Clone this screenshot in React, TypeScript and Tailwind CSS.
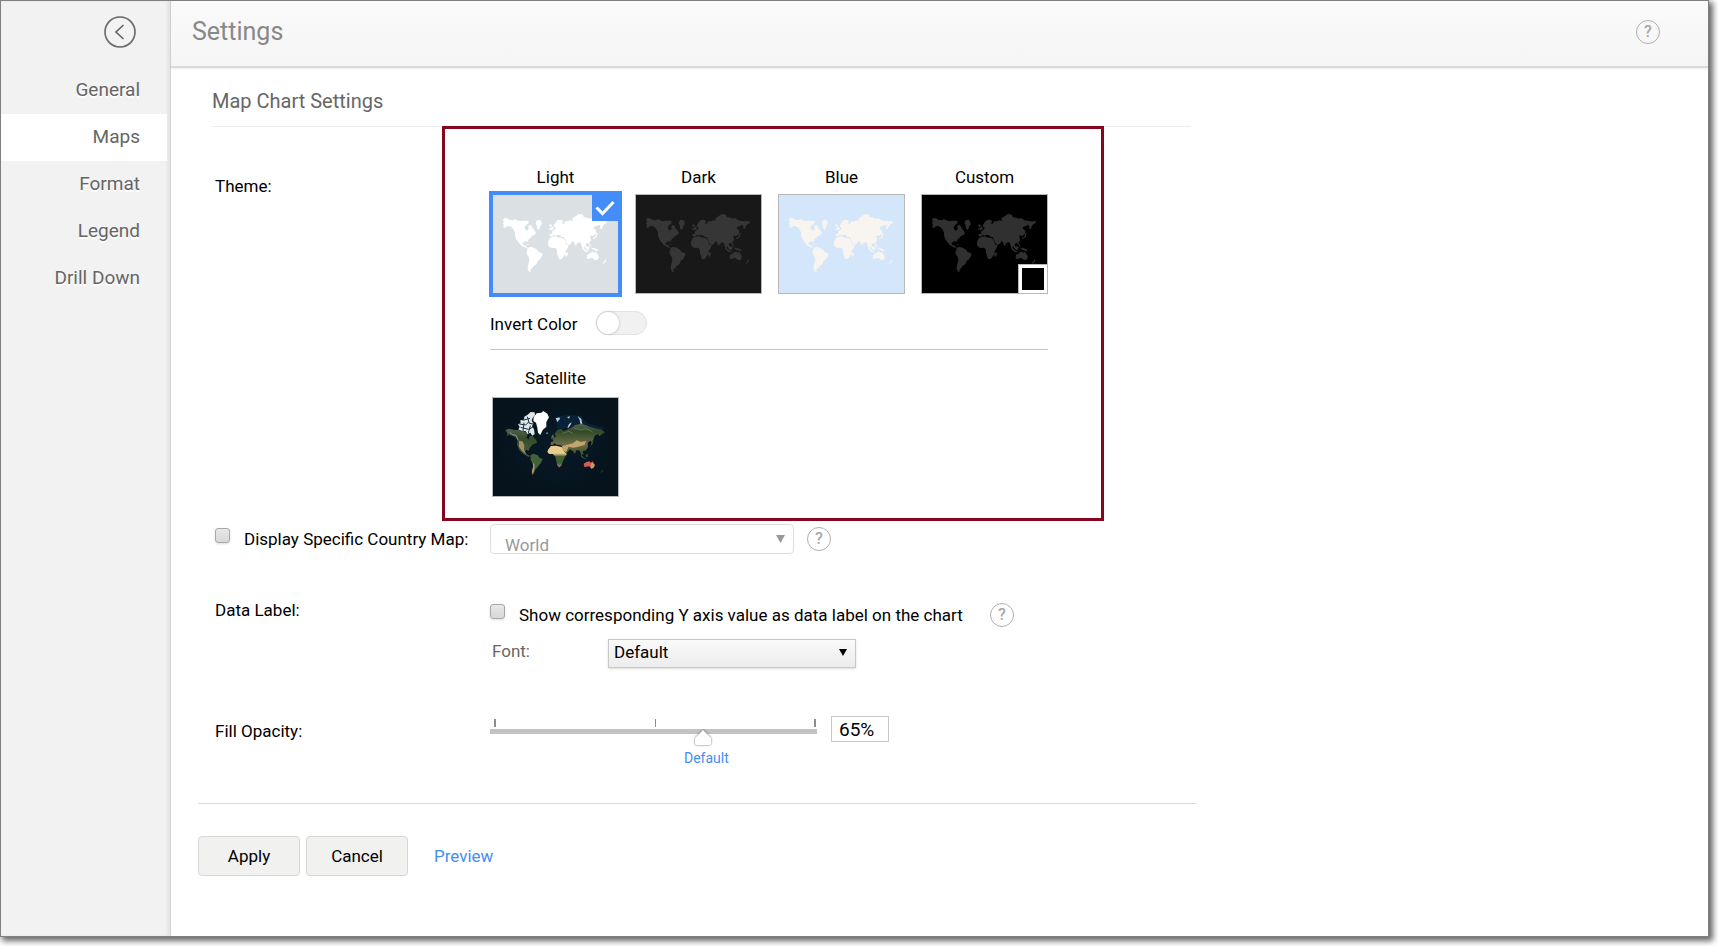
import React, { useState } from 'react';
import { clsx } from 'clsx';

interface MapTheme {
  id: string;
  label: string;
  background: string;
  land: string;
}

const menuItems = ['General', 'Maps', 'Format', 'Legend', 'Drill Down'];

const themes: MapTheme[] = [
  { id: 'light', label: 'Light', background: 'bg-[#dbe0e4]', land: 'text-white' },
  { id: 'dark', label: 'Dark', background: 'bg-[#181818]', land: 'text-[#363636]' },
  { id: 'blue', label: 'Blue', background: 'bg-[#d4e6f9]', land: 'text-[#f8f4f0]' },
  { id: 'custom', label: 'Custom', background: 'bg-black', land: 'text-[#303030]' },
];

function WorldMap({ className }: { className?: string }) {
  return (
    <svg className={clsx('block h-full w-full', className)} viewBox="48 105 375 294" fill="currentColor" aria-hidden="true">
      {/* North America */}
      <path d="M78 180L82 174L90 175L97 179L108 181L113 177L120 181L130 184L136 182L154 182L155 189L148 195L143 200L144 207L150 212L155 207L154 198L160 195L166 200L167 206L172 210L177 219L172 225L164 229L160 234L155 238L151 247L147 243L140 246L136 250L139 256L145 255L147 260L153 264L149 265L140 260L131 255L124 246L117 236L114 226L114 217L109 208L104 202L98 199L91 198L84 204L78 201L81 196L78 190L81 185Z" />
      <path d="M148 251L158 254L157 256L149 253Z" />
      {/* Greenland and Iceland */}
      <path d="M177 185L181 180L188 179L193 184L194 193L190 199L187 208L184 210L180 205L179 196L176 190Z" />
      <path d="M217 194L222 193L225 197L222 201L217 199Z" />
      {/* South America */}
      <path d="M151 266L157 261L166 262L173 265L180 269L185 276L193 279L197 283L193 291L189 298L182 303L179 311L174 316L169 318L167 323L162 326L160 331L162 335L157 335L153 330L152 322L154 312L157 301L156 293L151 285L148 277L151 271Z" />
      {/* Africa */}
      <path d="M219 234L226 230L235 229L243 232L250 233L259 235L264 243L268 254L275 256L272 264L266 272L266 282L261 287L257 294L251 298L246 297L243 288L240 278L239 268L234 263L225 264L218 262L213 254L213 245Z" />
      <path d="M270 276L273 282L269 290L265 289L266 281Z" />
      {/* Europe and Asia */}
      <path d="M218 229L218 222L226 221L224 215L231 211L236 206L234 201L230 201L231 195L236 187L243 180L251 179L259 184L254 190L260 192L265 184L273 184L281 181L288 183L286 175L296 169L304 163L312 162L319 166L320 171L332 173L339 176L346 174L354 180L365 183L376 184L389 184L390 189L383 192L378 197L374 207L370 207L370 198L366 194L359 198L352 200L350 205L357 211L358 218L353 225L347 228L342 226L339 231L342 236L341 244L335 248L326 251L327 257L332 263L327 266L321 258L319 266L324 273L320 271L315 260L311 248L306 247L299 251L298 257L294 256L291 246L285 243L284 249L276 255L270 253L264 240L261 232L252 230L250 226L242 224L237 227L231 224L226 229Z" />
      <path d="M222 204L227 199L231 208L222 211ZM217 205L221 204L220 209L216 210Z" />
      {/* Japan */}
      <path d="M357 221L362 218L359 231L350 238L348 235L355 230Z" />
      {/* South-east Asia */}
      <path d="M317 262L329 273L336 275L334 277L325 275L315 265ZM327 264L335 257L338 263L334 271L328 270ZM335 245L340 253L344 262L340 259L334 250ZM344 263L352 264L361 268L366 273L359 273L351 269L344 267Z" />
      {/* Australia and New Zealand */}
      <path d="M330 285L337 281L343 276L350 275L353 280L357 274L360 281L365 287L365 294L360 301L353 299L346 294L339 295L333 298L329 295Z" />
      <path d="M384 297L388 302L385 306L380 311L377 309L384 303Z" />
    </svg>
  );
}

function SatelliteMap() {
  return (
    <svg className="block h-full w-full" viewBox="39 294 375 294" aria-hidden="true">
      <defs>
        <radialGradient id="ocean">
          <stop offset="0" stopColor="#081927" />
          <stop offset="1" stopColor="#06131c" />
        </radialGradient>
        <linearGradient id="americas" x1="0" y1="0" x2="0" y2="1">
          <stop offset="0" stopColor="#53604b" />
          <stop offset="0.35" stopColor="#354c2c" />
          <stop offset="1" stopColor="#4a6340" />
        </linearGradient>
        <linearGradient id="africa" x1="0" y1="0" x2="0" y2="1">
          <stop offset="0.35" stopColor="#e8ce8e" />
          <stop offset="0.5" stopColor="#496131" />
          <stop offset="0.8" stopColor="#3f5f35" />
          <stop offset="1" stopColor="#bb825b" />
        </linearGradient>
        <linearGradient id="asia" x1="0" y1="0" x2="0" y2="1">
          <stop offset="0" stopColor="#5a6351" />
          <stop offset="0.25" stopColor="#304a28" />
          <stop offset="0.65" stopColor="#6b6c46" />
          <stop offset="1" stopColor="#38502d" />
        </linearGradient>
      </defs>
      <rect x="39" y="294" width="375" height="294" fill="url(#ocean)" />
      {/* Arctic shelf */}
      <path d="M226 352L260 345L302 347L320 369L372 384L360 395L285 377L232 390Z" fill="#0a2238" />
      {/* Arctic islands and Greenland */}
      <path d="M143 344L152 336L164 337L165 346L158 353L155 362L160 370L156 379L162 388L164 402L157 407L151 398L142 402L137 393L126 394L115 388L119 381L114 373L122 370L121 361L132 359L133 350Z" fill="#dfe7e8" />
      <path d="M118 372L137 375L146 366M142 350L148 370L160 372M122 382L145 388L158 382M151 377L145 399M128 361L150 355M132 368L129 393" fill="none" stroke="#14303e" strokeWidth="3" />
      <path d="M161 352L170 340L184 338L190 333L202 341L207 352L199 366L199 380L188 390L181 405L174 398L172 383L168 368L160 363Z" fill="#fff" />
      <path d="M227 355L238 352L240 357L232 366ZM261 351L270 349L267 356ZM293 348L304 357L307 372L301 371L299 360ZM262 383L267 372L275 367L272 374L265 384Z" fill="#b9ccd8" />
      <path d="M197 398L204 397L205 401L199 403Z" fill="#5d7d7c" />
      {/* North America */}
      <path d="M76 390L87 386L104 390L121 391L138 397L143 405L139 412L146 419L149 409L157 407L169 421L171 428L157 434L149 444L146 452L139 449L135 454L139 462L150 468L145 470L131 462L118 450L111 434L112 421L105 411L96 407L86 404L79 410L83 402Z" fill="url(#americas)" />
      <path d="M117 422L127 424L133 435L132 449L138 462L127 454L117 440Z" fill="#a78c66" />
      <path d="M89 396L98 404L108 406L115 421" fill="none" stroke="#a9bab0" strokeWidth="2" />
      {/* South America */}
      <path d="M151 466L160 461L174 466L178 473L188 477L184 487L177 496L171 503L165 510L162 519L158 526L155 517L159 502L159 490L152 481Z" fill="#41613a" />
      <path d="M157 484L164 496L162 512L158 524L156 513L160 499Z" fill="#c79577" />
      {/* Africa */}
      <path d="M205 448L213 438L229 437L247 442L254 455L261 462L255 471L249 484L244 497L238 502L232 497L229 484L226 470L218 462L207 462L202 455Z" fill="url(#africa)" />
      {/* Europe and Asia */}
      <path d="M212 434L212 427L221 424L217 418L228 409L224 401L231 391L243 387L251 393L260 389L272 384L286 375L303 371L318 376L330 381L349 386L365 389L375 397L365 403L358 409L354 402L344 407L341 416L335 426L331 422L323 428L324 441L318 451L308 454L311 463L304 465L299 452L290 450L285 462L279 454L270 448L260 460L252 455L247 439L240 435L230 434L224 429L218 435Z" fill="url(#asia)" />
      <path d="M246 438L261 434L279 430L290 421L302 426L319 423L313 435L295 440L280 443L266 440L258 457L249 452Z" fill="#c2a56e" />
      <path d="M215 408L220 402L222 414L213 416Z" fill="#557341" />
      <path d="M282 384L304 390L318 386L338 396M247 400L267 394L280 401" fill="none" stroke="#71806b" strokeWidth="2" />
      <path d="M302 462L312 473L318 475L315 477L304 471ZM317 464L323 461L323 471L318 471ZM335 425L341 420L338 431L331 439Z" fill="#365b3c" />
      {/* Australia and New Zealand */}
      <path d="M311 491L319 486L329 484L333 489L338 484L344 494L342 502L335 506L328 499L313 501Z" fill="#d65c50" />
      <path d="M335 487L344 494L342 502L335 506L331 502Z" fill="#c09a66" />
      <path d="M367 507L371 512L363 518L360 516L367 512Z" fill="#1d3a35" />
    </svg>
  );
}

function HelpButton({ label }: { label: string }) {
  return (
    <button
      type="button"
      aria-label={label}
      className="flex size-6 shrink-0 items-center justify-center rounded-full border border-[#b0b0b0] text-base leading-none font-medium text-[#a8a8a8]"
    >
      ?
    </button>
  );
}

function CheckBox({ id }: { id: string }) {
  return (
    <input
      id={id}
      type="checkbox"
      className="mt-px size-[15px] shrink-0 appearance-none rounded-[3px] border border-[#a8a8a8] bg-linear-to-b from-[#e8e8e8] to-[#d8d8d8] shadow-sm checked:bg-[#448df8]"
    />
  );
}

export default function App() {
  const [activeMenu, setActiveMenu] = useState('Maps');
  const [theme, setTheme] = useState('light');
  const [opacity, setOpacity] = useState(65);

  return (
    <div className="flex min-h-screen bg-white pr-[9px] pb-[9px] font-['Roboto','Liberation_Sans',sans-serif] text-[17px] leading-6 text-black">
      <div className="flex flex-1 border border-[#808080] shadow-[3px_3px_6px_1px_rgba(0,0,0,0.6)]">
        <aside className="flex w-[170px] shrink-0 flex-col border-r border-[#d4d4d4] bg-[#f2f2f2] pr-[3px] shadow-[inset_-3px_0_3px_rgba(0,0,0,0.06)]">
          <div className="flex h-[66px] items-center justify-end pr-[31px] pb-1">
            <button type="button" aria-label="Back" className="size-8 text-[#666]">
              <svg viewBox="0 0 32 32" fill="none" stroke="currentColor">
                <circle cx="16" cy="16" r="15" strokeWidth="1.6" />
                <path d="M19.5 9L12 16L19.5 23" strokeWidth="1.7" />
              </svg>
            </button>
          </div>
          <nav className="flex flex-col">
            {menuItems.map((item) => (
              <button
                key={item}
                type="button"
                onClick={() => setActiveMenu(item)}
                className={clsx(
                  'h-[47px] pr-[27px] pb-px text-right text-[19px] text-[#666] text-shadow-[0_2px_0_#fff]',
                  activeMenu === item && 'bg-white'
                )}
              >
                {item}
              </button>
            ))}
          </nav>
        </aside>

        <main className="min-w-0 flex-1 bg-white">
          <header className="flex h-[67px] items-center justify-between border-b-2 border-[#dadada] bg-linear-to-b from-[#fafafa] to-[#f5f5f5] pr-12 pb-[3px] pl-[21px] shadow-[0_1px_2px_rgba(0,0,0,0.08)]">
            <h1 className="text-[25px] text-[#888]">Settings</h1>
            <HelpButton label="Settings help" />
          </header>

          <form className="ml-[27px] max-w-[999px]" onSubmit={(e) => e.preventDefault()}>
            <div className="mr-1.5 ml-[14px] flex h-[59px] items-center border-b border-[#ececec] pt-2">
              <h2 className="text-xl text-[#666]">Map Chart Settings</h2>
            </div>

            {/* Theme */}
            <div className="flex pl-[17px]">
              <span className="w-[275px] shrink-0 pt-[47px]">Theme:</span>
              <div className="relative w-[558px] pt-[38px]">
                <div className="pointer-events-none absolute -top-px -right-14 -bottom-6 -left-12 border-3 border-[#86061f]" />
                <div className="flex justify-between pl-0.5">
                  {themes.map((item) => (
                    <div key={item.id} className="flex w-[127px] flex-col gap-[5px] text-center">
                      <span id={`theme-${item.id}`}>{item.label}</span>
                      <button
                        type="button"
                        aria-labelledby={`theme-${item.id}`}
                        aria-pressed={theme === item.id}
                        onClick={() => setTheme(item.id)}
                        className={clsx(
                          'relative h-[100px] border',
                          item.background,
                          theme === item.id ? 'border-[#448df8] ring-3 ring-[#448df8]' : 'border-[#b8b8b8]'
                        )}
                      >
                        <WorldMap className={item.land} />
                        {theme === item.id && (
                          <span className="absolute top-0 right-0 flex size-[26px] items-center justify-center bg-[#448df8] text-white">
                            <svg className="size-5" viewBox="0 0 20 20" fill="none" stroke="currentColor" strokeWidth="3" aria-hidden="true">
                              <path d="M1.5 9.5L7.5 15.5L18.5 4" />
                            </svg>
                          </span>
                        )}
                        {item.id === 'custom' && (
                          <span className="absolute -right-px -bottom-px size-[30px] border border-[#b8b8b8] bg-white p-[3px]">
                            <span className="block size-full bg-black" />
                          </span>
                        )}
                      </button>
                    </div>
                  ))}
                </div>

                <div className="mt-[17px] flex h-[39px] items-start gap-[19px] border-b border-[#c8c8c8]">
                  <label htmlFor="invert" className="pt-px">Invert Color</label>
                  <input
                    id="invert"
                    type="checkbox"
                    role="switch"
                    className="flex h-6 w-[51px] appearance-none items-center rounded-full border border-[#e2e2e4] bg-[#f1f1f1] before:size-[22px] before:rounded-full before:bg-white before:shadow-[0_0_3px_rgba(0,0,0,0.25)] checked:justify-end checked:bg-[#448df8]"
                  />
                </div>

                <div className="mt-4 ml-0.5 flex w-[127px] flex-col gap-[7px] text-center">
                  <span id="theme-satellite">Satellite</span>
                  <button
                    type="button"
                    aria-labelledby="theme-satellite"
                    aria-pressed={theme === 'satellite'}
                    onClick={() => setTheme('satellite')}
                    className={clsx('h-[100px] border border-[#b8b8b8]', theme === 'satellite' && 'ring-3 ring-[#448df8]')}
                  >
                    <SatelliteMap />
                  </button>
                </div>
              </div>
            </div>

            {/* Country map */}
            <div className="mt-[27px] flex items-center pl-[17px]">
              <div className="flex w-[275px] shrink-0 gap-[14px]">
                <CheckBox id="country-map" />
                <label htmlFor="country-map" className="whitespace-nowrap">Display Specific Country Map:</label>
              </div>
              <div className="relative mr-[13px] w-[304px]">
                <select
                  disabled
                  aria-label="Country map"
                  className="block h-[30px] w-full appearance-none rounded border border-[#dedede] bg-white pt-2 pl-[14px] text-[#999]"
                >
                  <option>World</option>
                </select>
                <svg className="pointer-events-none absolute top-[11px] right-[9px] h-2 w-[9px] text-[#999]" viewBox="0 0 9 8" fill="currentColor" aria-hidden="true">
                  <path d="M0 0H9L4.5 8Z" />
                </svg>
              </div>
              <HelpButton label="Country map help" />
            </div>

            {/* Data label */}
            <div className="mt-11 flex pl-[17px]">
              <span className="w-[275px] shrink-0">Data Label:</span>
              <div className="pt-[5px]">
                <div className="flex items-center">
                  <div className="flex gap-[14px]">
                    <CheckBox id="data-label" />
                    <label htmlFor="data-label" className="mr-[27px]">Show corresponding Y axis value as data label on the chart</label>
                  </div>
                  <HelpButton label="Data label help" />
                </div>
                <div className="mt-3 flex pl-0.5">
                  <label htmlFor="font" className="w-[116px] text-[#666]">Font:</label>
                  <div className="relative w-[248px]">
                    <select
                      id="font"
                      className="block h-[29px] w-full appearance-none border border-[#c8c8c8] bg-linear-to-b from-[#fafafa] to-[#ececec] pb-1 pl-[5px] shadow-sm"
                    >
                      <option>Default</option>
                    </select>
                    <svg className="pointer-events-none absolute top-2.5 right-[9px] h-[7px] w-2" viewBox="0 0 8 7" fill="currentColor" aria-hidden="true">
                      <path d="M0 0H8L4 7Z" />
                    </svg>
                  </div>
                </div>
              </div>
            </div>

            {/* Fill opacity */}
            <div className="mt-12 flex h-[87px] pl-[17px]">
              <label htmlFor="opacity" className="w-[275px] shrink-0 pt-[3px]">Fill Opacity:</label>
              <div className="relative h-14 w-[327px]">
                <div className="mt-[3px] flex h-2 justify-between pr-px pl-1">
                  <span className="w-0.5 bg-[#8c8c8c]" />
                  <span className="w-px bg-[#8c8c8c]" />
                  <span className="w-0.5 bg-[#8c8c8c]" />
                </div>
                <div className="mt-0.5 h-[5px] bg-[#c2c2c2]" />
                <div className="absolute top-3.5 w-4 -translate-x-1/2" style={{ left: `${opacity}%` }}>
                  <svg className="w-4 drop-shadow-[0_0_1px_rgba(0,0,0,0.6)]" viewBox="0 0 16 15" fill="#fff" aria-hidden="true">
                    <path d="M8 0L16 8V13Q16 15 14 15H2Q0 15 0 13V8Z" />
                  </svg>
                </div>
                <input
                  id="opacity"
                  type="range"
                  value={opacity}
                  onChange={(e) => setOpacity(Number(e.target.value))}
                  className="absolute inset-x-0 top-1 h-6 w-full opacity-0"
                />
                <button
                  type="button"
                  onClick={() => setOpacity(65)}
                  className="absolute top-8 left-[194px] text-sm text-[#448df8]"
                >
                  Default
                </button>
              </div>
              <input
                type="text"
                aria-label="Fill opacity value"
                value={`${opacity}%`}
                onChange={(e) => setOpacity(Math.min(100, parseInt(e.target.value, 10) || 0))}
                className="ml-[14px] h-[26px] w-[58px] border border-[#c8c8c8] pl-[7px] text-[19px]"
              />
            </div>

            <div className="flex items-center gap-1.5 border-t border-[#dcdcdc] pt-8">
              <button type="submit" className="h-10 w-[102px] rounded border border-[#d6d6d6] bg-[#f1f1f0]">Apply</button>
              <button type="button" className="h-10 w-[102px] rounded border border-[#d6d6d6] bg-[#f1f1f0]">Cancel</button>
              <a href="#preview" className="ml-5 text-[#448df8]">Preview</a>
            </div>
          </form>
        </main>
      </div>
    </div>
  );
}
